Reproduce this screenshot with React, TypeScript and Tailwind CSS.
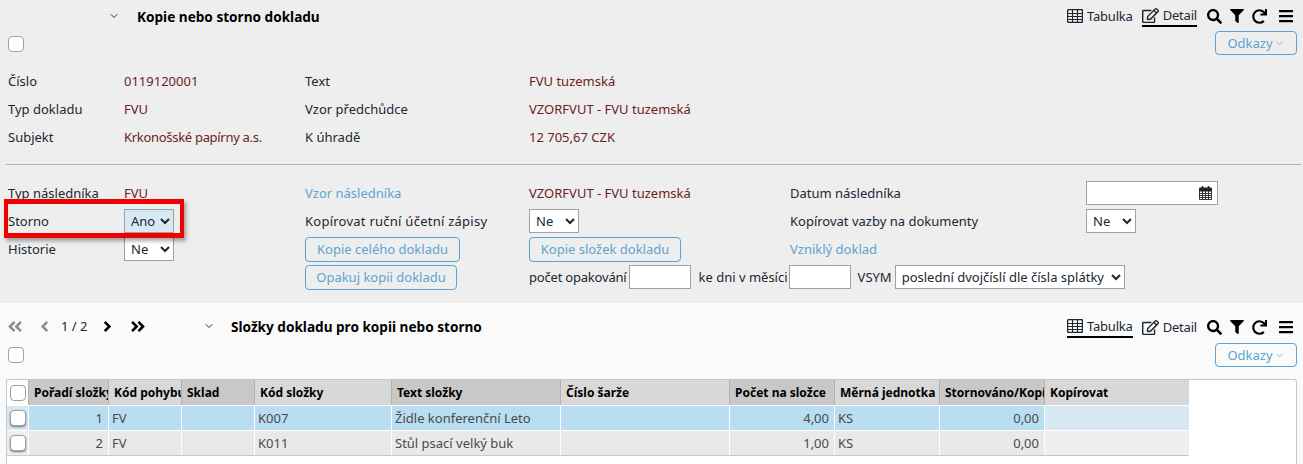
import { FaRegEdit, FaSearch, FaFilter, FaRedo, FaBars, FaAngleDoubleLeft, FaAngleLeft, FaAngleRight, FaAngleDoubleRight } from 'react-icons/fa'
import { ChevronDown } from 'lucide-react'

const value = 'text-[#6b2222]'
const link = 'text-[#5aa5d0]'

function TableIcon() {
  return (
    <svg viewBox="0 0 16 14" className="h-[14px] w-[16px]" fill="none" stroke="currentColor">
      <rect x="0.5" y="0.5" width="15" height="13" rx="1.5" strokeWidth="1.4" />
      <path d="M0.5 4.5h15M0.5 7.5h15M0.5 10.5h15M5.5 1v12M10.5 1v12" strokeWidth="1.1" />
    </svg>
  )
}

function CalendarIcon() {
  return (
    <svg viewBox="0 0 13 14" className="h-[14px] w-[13px] text-[#222]">
      <rect x="0" y="1.5" width="13" height="4" rx="1" fill="currentColor" />
      <rect x="2.5" y="0" width="2" height="3.5" rx="1" fill="currentColor" />
      <rect x="8.5" y="0" width="2" height="3.5" rx="1" fill="currentColor" />
      <path d="M0.5 5v8.5h12V5M0.5 7.5h12M0.5 9.5h12M0.5 11.5h12M3.5 5v8M6.5 5v8M9.5 5v8" fill="none" stroke="currentColor" strokeWidth="0.9" />
    </svg>
  )
}

function Check({ raised }: { raised?: boolean }) {
  return (
    <span className={`block h-4 w-4 rounded-[4px] border border-[#a0a0a0] bg-white ${raised ? 'shadow-[0_1px_2px_rgba(0,0,0,0.5)]' : ''}`} />
  )
}

function Toolbar({ active }: { active: 'table' | 'detail' }) {
  return (
    <div className="flex items-start text-[#1b2733]">
      <div className={`flex h-[22px] items-center gap-[4px] ${active === 'table' ? 'border-b-2 border-black' : ''}`}>
        <TableIcon />
        <span className="tracking-[-0.2px]">Tabulka</span>
      </div>
      <div className={`ml-[9px] flex h-[22px] items-center gap-[4px] ${active === 'detail' ? 'border-b-2 border-black' : ''}`}>
        <FaRegEdit className="h-[17px] w-[17px]" />
        <span className="tracking-[-0.2px]">Detail</span>
      </div>
      <div className="ml-[10px] flex h-[22px] items-center text-black">
        <FaSearch className="h-[15px] w-[15px]" />
        <FaFilter className="ml-[8px] h-[14px] w-[14px]" />
        <FaRedo className="ml-[8px] h-[15px] w-[15px]" />
        <FaBars className="ml-[11px] h-[16px] w-[16px]" />
      </div>
    </div>
  )
}

function Odkazy() {
  return (
    <button className={`flex h-6 w-[82px] items-center justify-center gap-[1px] rounded border border-[#5aa5cf] ${link}`}>
      Odkazy <ChevronDown className="h-[11px] w-[11px]" strokeWidth={1.5} />
    </button>
  )
}

function Select({ label, className }: { label: string; className: string }) {
  return (
    <select className={`h-6 border border-[#a0a0a0] px-[2px] text-[#1b2733] ${className}`} defaultValue={label}>
      <option>{label}</option>
    </select>
  )
}

function ActionButton({ label, width }: { label: string; width: string }) {
  return <button className={`h-[25px] rounded border border-[#5aa5cf] ${link} ${width}`}>{label}</button>
}

function Cell({ children, className = '' }: { children?: React.ReactNode; className?: string }) {
  return <div className={`flex items-center overflow-hidden whitespace-nowrap ${className}`}>{children}</div>
}

const gridCols = 'grid-cols-[21px_80px_73px_73px_137px_169px_169px_105px_105px_105px_145px]'
const headers = ['Pořadí složky', 'Kód pohybu', 'Sklad', 'Kód složky', 'Text složky', 'Číslo šarže', 'Počet na složce', 'Měrná jednotka', 'Stornováno/Kopírováno', 'Kopírovat']

const rows = [
  { no: '1', code: 'K007', text: 'Židle konferenční Leto', qty: '4,00', bg: 'bg-[#b9ddf1]', last: 'bg-[#d7eaf4]', side: 'bg-[#d7eaf4]' },
  { no: '2', code: 'K011', text: 'Stůl psací velký buk', qty: '1,00', bg: 'bg-[#e9e9e9]', last: 'bg-[#efefef]', side: 'bg-[#efefef]' },
]

export default function App() {
  return (
    <div className="h-[464px] w-[1303px] overflow-hidden bg-[#fafafa] font-['Noto_Sans',sans-serif] text-[13px] leading-[18px] text-[#1b2733]">
      <div className="relative h-[303px] bg-[#eeeeee]">
        {/* header */}
        <div className="flex h-[31px] items-start pl-[108px] pr-[9px] pt-[7px]">
          <ChevronDown className="mt-[3px] h-[12px] w-[12px] text-[#333]" strokeWidth={2} />
          <h2 className="ml-[17px] text-[13.6px] font-bold leading-[20px] text-black">Kopie nebo storno dokladu</h2>
          <div className="ml-auto -mt-[2px]">
            <Toolbar active="detail" />
          </div>
        </div>
        <div className="flex h-[24px] items-start justify-between pl-[8px] pr-[6px]">
          <div className="mt-[5px]"><Check /></div>
          <Odkazy />
        </div>

        {/* document summary */}
        <div className="mt-[12px] grid grid-cols-[116px_181px_1fr] auto-rows-[28px] items-center pl-[8px]">
          <span>Číslo</span><span className={value}>0119120001</span>
          <div className="grid grid-cols-[224px_1fr]"><span>Text</span><span className={value}>FVU tuzemská</span></div>
          <span>Typ dokladu</span><span className={value}>FVU</span>
          <div className="grid grid-cols-[224px_1fr]"><span>Vzor předchůdce</span><span className={value}>VZORFVUT - FVU tuzemská</span></div>
          <span>Subjekt</span><span className={`${value} tracking-[-0.3px]`}>Krkonošské papírny a.s.</span>
          <div className="grid grid-cols-[224px_1fr]"><span>K úhradě</span><span className={value}>12 705,67 CZK</span></div>
        </div>

        <div className="ml-[6px] mr-[2px] mt-[13px] border-t border-[#b4b4b4]" />

        {/* copy form */}
        <div className="mt-[14px] grid grid-cols-[116px_181px_224px_261px_296px_1fr] auto-rows-[28px] items-center pl-[8px]">
          <span>Typ následníka</span>
          <span className={value}>FVU</span>
          <span className={link}>Vzor následníka</span>
          <span className={value}>VZORFVUT - FVU tuzemská</span>
          <span>Datum následníka</span>
          <div className="flex h-6 w-[132px] items-center justify-end border border-[#a0a0a0] bg-white pr-[5px]">
            <CalendarIcon />
          </div>

          <span>Storno</span>
          <Select label="Ano" className="w-[50px] bg-[#d7eaf4]" />
          <span className="tracking-[0.25px]">Kopírovat ruční účetní zápisy</span>
          <Select label="Ne" className="w-[50px] bg-white" />
          <span>Kopírovat vazby na dokumenty</span>
          <Select label="Ne" className="w-[50px] bg-white" />

          <span>Historie</span>
          <Select label="Ne" className="w-[50px] bg-white" />
          <ActionButton label="Kopie celého dokladu" width="w-[155px]" />
          <ActionButton label="Kopie složek dokladu" width="w-[152px]" />
          <span className={link}>Vzniklý doklad</span>
          <span />

          <span />
          <span />
          <ActionButton label="Opakuj kopii dokladu" width="w-[152px]" />
          <div className="col-span-3 flex items-center">
            <span className="tracking-[-0.2px]">počet opakování</span>
            <input className="ml-[2px] h-6 w-[62px] border border-[#a0a0a0] bg-white" />
            <span className="ml-[8px]">ke dni v měsíci</span>
            <input className="ml-[1px] h-6 w-[62px] border border-[#a0a0a0] bg-white" />
            <span className="ml-[7px]">VSYM</span>
            <Select label="poslední dvojčíslí dle čísla splátky" className="ml-[3px] w-[230px] bg-white" />
          </div>
        </div>

        {/* highlight */}
        <div className="absolute left-[4px] top-[199px] h-[39px] w-[180px] border-x-4 border-y-[5px] border-[#f00000] shadow-[2px_3px_4px_rgba(0,0,0,0.35)]" />
      </div>

      {/* folders */}
      <div className="flex h-[31px] items-start pl-[7px] pr-[9px] pt-[14px]">
        <div className="flex h-[18px] items-center">
          <FaAngleDoubleLeft className="h-[17px] w-[16px] text-[#8f8f8f]" />
          <FaAngleLeft className="ml-[16px] h-[17px] w-[11px] text-[#8f8f8f]" />
          <span className="ml-[11px] w-[29px]">1 / 2</span>
          <FaAngleRight className="ml-[12px] h-[17px] w-[11px] text-black" />
          <FaAngleDoubleRight className="ml-[17px] h-[17px] w-[16px] text-black" />
        </div>
        <ChevronDown className="ml-[57px] mt-[3px] h-[12px] w-[12px] text-[#333]" strokeWidth={2} />
        <h2 className="ml-[16px] text-[13.6px] font-bold leading-[20px] text-black">Složky dokladu pro kopii nebo storno</h2>
        <div className="ml-auto -mt-[1px]">
          <Toolbar active="table" />
        </div>
      </div>
      <div className="mt-[9px] flex h-[24px] items-start justify-between pl-[8px] pr-[6px]">
        <div className="mt-[4px]"><Check /></div>
        <Odkazy />
      </div>

      <div className="mx-[6px] mt-[12px] h-[90px] rounded-t-[3px] border border-b-0 border-[#c8c8c8] bg-white">
        <div className={`grid ${gridCols} h-[25px] w-fit`}>
          <div className="flex items-center justify-center pl-[1px]"><Check /></div>
          {headers.map((h, i) => (
            <Cell key={h} className={`border-l border-[#b0b0b0] pl-[5px] text-[12px] font-bold text-black ${i % 2 === 0 ? 'bg-[#c8c8c8]' : 'bg-[#d8d8d8]'}`}>
              {h}
            </Cell>
          ))}
        </div>
        {rows.map((r) => (
          <div key={r.no} className={`grid ${gridCols} h-[25px] w-fit border-t border-white text-[#4a4a4a]`}>
            <div className={`flex items-center justify-center pl-[1px] ${r.side}`}><Check raised /></div>
            <Cell className={`justify-end border-l border-white pr-[5px] ${r.bg}`}>{r.no}</Cell>
            <Cell className={`border-l border-white pl-[3px] ${r.bg}`}>FV</Cell>
            <Cell className={`border-l border-white ${r.bg}`} />
            <Cell className={`border-l border-white pl-[3px] ${r.bg}`}>{r.code}</Cell>
            <Cell className={`border-l border-white pl-[3px] ${r.bg}`}>{r.text}</Cell>
            <Cell className={`border-l border-white ${r.bg}`} />
            <Cell className={`justify-end border-l border-white pr-[5px] ${r.bg}`}>{r.qty}</Cell>
            <Cell className={`border-l border-white pl-[3px] ${r.bg}`}>KS</Cell>
            <Cell className={`justify-end border-l border-white pr-[5px] ${r.bg}`}>0,00</Cell>
            <Cell className={`border-l border-white ${r.last}`} />
          </div>
        ))}
        <div className="h-px w-[1182px] bg-[#c8c8c8]" />
      </div>
    </div>
  )
}
